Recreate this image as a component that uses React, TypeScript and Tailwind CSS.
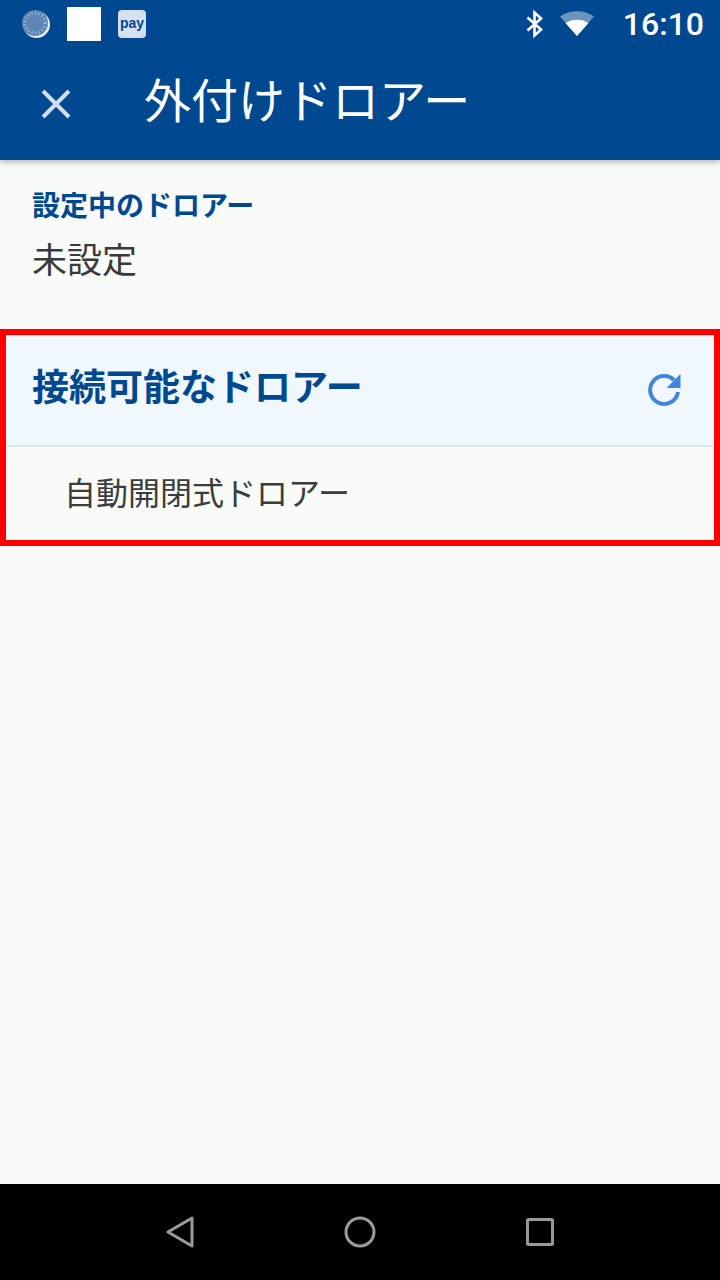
export default function App() {
  const font = { fontFamily: '"Roboto", "Noto Sans CJK JP", sans-serif' };
  return (
    <div style={font} className="w-[720px] h-[1280px] flex flex-col bg-[#f9fbf9] overflow-hidden">
      {/* Status bar + title */}
      <header className="h-[160px] bg-[#004890] shadow-[0_2px_6px_rgba(0,0,0,0.3)] relative z-10 shrink-0">
        <div className="h-[48px] flex items-center pl-[22px] pr-[16px]">
          <svg width="28" height="28" viewBox="0 0 28 28" className="mt-[-1px]">
            <circle cx="14.5" cy="14.5" r="13.5" fill="#e9eef5" />
            <circle cx="13" cy="13" r="13" fill="#5d85b5" />
            <circle cx="13" cy="13" r="10" fill="none" stroke="#a9bfda" strokeWidth="3" strokeDasharray="1 2.6" />
          </svg>
          <div className="w-[34px] h-[34px] bg-white ml-[17px]" />
          <div className="w-[28px] h-[28px] bg-[#d7e1ee] rounded-[4px] ml-[17px] flex items-center justify-center text-[14px] font-bold text-[#004890] leading-none pb-[2px] font-['Liberation_Sans']">
            pay
          </div>
          <svg width="20" height="28" viewBox="0 0 20 28" className="ml-auto" fill="none" stroke="white" strokeWidth="2.6">
            <path d="M2.5 7.5 L16 19.5 L9.5 25.5 V2.5 L16 8.5 L2.5 20.5" />
          </svg>
          <svg width="36" height="28" viewBox="0 0 36 28" className="ml-[14px]">
            <path d="M18 26 L1 6.5 C10.5 -0.5 25.5 -0.5 35 6.5 Z" fill="#ffffff" fillOpacity="0.42" />
            <path d="M18 26 L6.5 13 C13 8.5 23 8.5 29.5 13 Z" fill="#ffffff" />
          </svg>
          <span className="ml-[28px] text-[32px] font-medium text-white leading-none">16:10</span>
        </div>
        <div className="h-[112px] flex items-center">
          <svg width="30" height="30" viewBox="0 0 30 30" className="ml-[41px] mt-[-1px]" stroke="#d2dfed" strokeWidth="4" fill="none">
            <path d="M2 2 L28 28 M28 2 L2 28" />
          </svg>
          <h1 className="ml-[73px] text-[47px] text-white leading-none mb-[6px]">外付けドロアー</h1>
        </div>
      </header>

      <main className="flex-1 flex flex-col">
        {/* Current drawer */}
        <section className="h-[169px] pl-[32px] pt-[30px]">
          <div className="text-[28px] font-bold text-[#004890] leading-[34px]">設定中のドロアー</div>
          <div className="text-[35px] text-[#3a3a3a] leading-[40px] mt-[18px]">未設定</div>
        </section>

        {/* Available drawers */}
        <section className="h-[217px] border-[6px] border-[#ff0000] flex flex-col">
          <div className="h-[112px] bg-[#f0f7fd] border-y-2 border-[#e4e6e4] border-t-[1px] flex items-center justify-between pl-[26px] pr-[33px]">
            <h2 className="text-[37px] font-bold text-[#004890] leading-none mb-[4px]">接続可能なドロアー</h2>
            <svg width="33" height="33" viewBox="0 0 33 33" fill="none">
              <path d="M30 18 A14 14 0 1 1 26 6" stroke="#4385dc" strokeWidth="4" />
              <path d="M32.5 0 V14 H18.5 Z" fill="#4385dc" />
            </svg>
          </div>
          <div className="flex-1 flex items-center pl-[58px]">
            <span className="text-[32px] text-[#3c3c3c] leading-none">自動開閉式ドロアー</span>
          </div>
        </section>
      </main>

      {/* Nav bar */}
      <nav className="h-[96px] bg-black shrink-0 flex items-center justify-center">
        <div className="w-[400px] flex items-center justify-between px-[6px]">
          <svg width="28" height="32" viewBox="0 0 28 32" fill="none" stroke="#999b99" strokeWidth="3" strokeLinejoin="round">
            <path d="M26 2 V30 L2 16 Z" />
          </svg>
          <svg width="32" height="32" viewBox="0 0 32 32" fill="none" stroke="#999b99" strokeWidth="3">
            <circle cx="16" cy="16" r="14" />
          </svg>
          <svg width="28" height="28" viewBox="0 0 28 28" fill="none" stroke="#999b99" strokeWidth="3" strokeLinejoin="round">
            <rect x="1.5" y="1.5" width="25" height="25" rx="1" />
          </svg>
        </div>
      </nav>
    </div>
  );
}
